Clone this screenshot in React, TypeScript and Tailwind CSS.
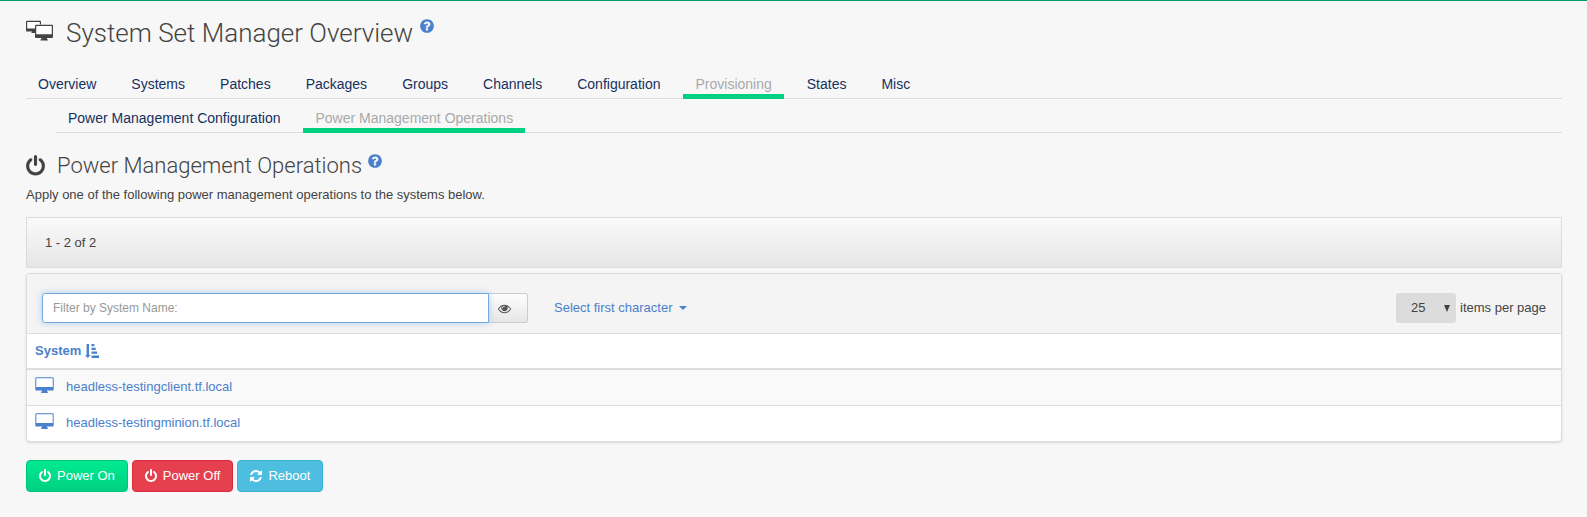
import React from "react";

const POWER =
  "M1664 896q0 156-61 298t-164 245-245 164-298 61-298-61-245-164-164-245-61-298q0-182 80.5-343t226.5-270q43-32 95.5-25t83.5 50q32 42 24.5 94.5t-49.5 84.5q-98 74-151.5 181t-53.5 228q0 104 40.5 198.5t109.5 163.5 163.5 109.5 198.5 40.5 198.5-40.5 163.5-109.5 109.5-163.5 40.5-198.5q0-121-53.5-228t-151.5-181q-42-32-49.5-84.5t24.5-94.5q31-43 84-50t95 25q146 109 226.5 270t80.5 343zm-640-768v640q0 52-38 90t-90 38-90-38-38-90v-640q0-52 38-90t90-38 90 38 38 90z";
const HELP =
  "M1024 1376v-192q0-14-9-23t-23-9h-192q-14 0-23 9t-9 23v192q0 14 9 23t23 9h192q14 0 23-9t9-23zm256-672q0-88-55.5-163t-138.5-116-170-41q-243 0-371 213-15 24 8 42l132 100q7 6 19 6 16 0 25-12 53-68 86-92 34-24 86-24 48 0 85.5 26t37.5 59q0 38-20 61t-68 45q-63 28-115.5 86.5t-52.5 125.5v36q0 14 9 23t23 9h192q14 0 23-9t9-23q0-19 21.5-49.5t54.5-49.5q32-18 49-28.5t46-35 44.5-48 28-60.5 12.5-81zm384 192q0 209-103 385.5t-279.5 279.5-385.5 103-385.5-103-279.5-279.5-103-385.5 103-385.5 279.5-279.5 385.5-103 385.5 103 279.5 279.5 103 385.5z";
const REFRESH =
  "M1639 1056q0 5-1 7-64 268-268 434.5t-478 166.5q-146 0-282.5-55t-243.5-157l-129 129q-19 19-45 19t-45-19-19-45v-448q0-26 19-45t45-19h448q26 0 45 19t19 45-19 45l-137 137q71 66 161 102t187 36q134 0 250-65t186-179q11-17 53-117 8-23 30-23h192q13 0 22.5 9.5t9.5 22.5zm25-800v448q0 26-19 45t-45 19h-448q-26 0-45-19t-19-45 19-45l138-138q-148-137-349-137-134 0-250 65t-186 179q-11 17-53 117-8 23-30 23h-199q-13 0-22.5-9.5t-9.5-22.5v-7q65-268 270-434.5t480-166.5q146 0 284 55.5t245 156.5l130-129q19-19 45-19t45 19 19 45z";
const EYE =
  "M1664 960q-152-236-381-353 61 104 61 225 0 185-131.5 316.5t-316.5 131.5-316.5-131.5-131.5-316.5q0-121 61-225-229 117-381 353 133 205 333.5 326.5t434.5 121.5 434.5-121.5 333.5-326.5zm-720-384q0-20-14-34t-34-14q-125 0-214.5 89.5t-89.5 214.5q0 20 14 34t34 14 34-14 14-34q0-86 61-147t147-61q20 0 34-14t14-34zm848 384q0 34-20 69-140 230-376.5 368.5t-499.5 138.500-499.500-139-376.500-368q-20-35-20-69t20-69q140-229 376.500-368t499.500-139 499.500 139 376.500 368q20 35 20 69z";

function Glyph({ d, className, viewBox = "128 0 1536 1792" }: { d: string; className: string; viewBox?: string }) {
  return (
    <svg viewBox={viewBox} fill="currentColor" aria-hidden="true" className={className}>
      <path d={d} />
    </svg>
  );
}

function DesktopIcon() {
  return (
    <svg viewBox="0 0 19 16" fill="currentColor" aria-hidden="true" className="h-4 w-[19px] shrink-0">
      <rect x="1" y="1" width="17" height="9" fill="#ffffff" />
      <path
        fillRule="evenodd"
        d="M1.500 0.200h16a1.200 1.200 0 0 1 1.200 1.200v11a1.200 1.200 0 0 1-1.200 1.200H12v1h.8V16H6.200v-1.400H7v-1H1.500A1.200 1.200 0 0 1 .3 12.400v-11A1.200 1.200 0 0 1 1.500.2zM1.300 1.200V10h16.400V1.200z"
      />
    </svg>
  );
}

function SystemsIcon() {
  return (
    <svg viewBox="0 0 27 21" fill="currentColor" aria-hidden="true" className="h-[21px] w-[27px] shrink-0">
      <rect x="1" y="2" width="13" height="7" fill="#ffffff" />
      <path
        fillRule="evenodd"
        d="M1 .8h13a1 1 0 0 1 1 1V4.500h-1.200V2H1.200V8.500H9.500V13H5.500v-1H6V11.500H1a1 1 0 0 1-1-1V1.800a1 1 0 0 1 1-1z"
      />
      <rect x="10" y="6" width="16" height="9" fill="#ffffff" />
      <path
        fillRule="evenodd"
        d="M10 4.800H26a1 1 0 0 1 1 1V17a1 1 0 0 1-1 1h-5v1.200h.8V20.500h-7.200v-1.300h.8V18H10a1 1 0 0 1-1-1V5.800a1 1 0 0 1 1-1zM10.200 6V14.300H25.800V6z"
      />
    </svg>
  );
}

function SortIcon() {
  return (
    <svg viewBox="0 0 14 14" fill="currentColor" aria-hidden="true" className="h-3.5 w-3.5">
      <path d="M1.600 0H4v11H5.500L2.800 14 0 11h1.600zM6.500 0H9.300v2.200H6.500zM6.500 3.800h4.200V6H6.500zM6.500 7.600h5.600v2.200H6.500zM6.500 11.400H14V14H6.500z" />
    </svg>
  );
}

function HelpLink() {
  return (
    <a href="#help" aria-label="Help" className="text-[#4a80cd]">
      <Glyph d={HELP} className="h-4 w-[14px]" />
    </a>
  );
}

function Tabs({ label, items, active, className }: { label: string; items: string[]; active: string; className: string }) {
  return (
    <nav aria-label={label} className={className}>
      <ul className="flex gap-[11px] border-b border-[#dcdcdc] text-[14px] leading-5">
        {items.map((item) => (
          <li key={item} className="-mb-px flex">
            <a
              href="#tab"
              aria-current={item === active ? "page" : undefined}
              className={
                item === active
                  ? "border-b-[5px] border-[#00d081] px-3 pt-1 text-[#a9a9ab]"
                  : "border-b-[5px] border-transparent px-3 pt-1 text-[#15315f]"
              }
            >
              {item}
            </a>
          </li>
        ))}
      </ul>
    </nav>
  );
}

const TABS = ["Overview", "Systems", "Patches", "Packages", "Groups", "Channels", "Configuration", "Provisioning", "States", "Misc"];
const SUBTABS = ["Power Management Configuration", "Power Management Operations"];
const SYSTEMS = ["headless-testingclient.tf.local", "headless-testingminion.tf.local"];

export default function App() {
  return (
    <main className="min-h-screen border-t border-[#009a66] bg-[#f7f7f7] pl-[26px] pr-[25px] font-['Liberation_Sans',Arial,sans-serif] text-[13px] leading-5 text-[#434343]">
      <div className="flex items-start pt-4">
        <span className="pt-[3px]">
          <SystemsIcon />
        </span>
        <h1 className="ml-[13px] mr-[7px] font-['Roboto',sans-serif] text-[26px] font-light leading-8">System Set Manager Overview</h1>
        <span className="pt-px">
          <HelpLink />
        </span>
      </div>

      <Tabs label="System set" items={TABS} active="Provisioning" className="mt-[21px]" />
      <Tabs label="Provisioning" items={SUBTABS} active="Power Management Operations" className="ml-[30px] mt-[5px]" />

      <div className="mt-[17px] flex items-start">
        <Glyph d={POWER} className="mt-[5px] h-[22px] w-[19px]" />
        <h2 className="ml-3 mr-[6px] font-['Roboto',sans-serif] text-[22px] font-light leading-8">Power Management Operations</h2>
        <span className="pt-[3px]">
          <HelpLink />
        </span>
      </div>
      <p className="mt-[3px]">Apply one of the following power management operations to the systems below.</p>

      <div className="mt-3 border border-[#dcdcdc] bg-linear-to-b from-[#fafafa] to-[#e6e6e6] px-[18px] py-[15px] text-[13px] leading-[19px]">1 - 2 of 2</div>

      <section className="mt-[5px] overflow-hidden rounded border border-[#dcdcdc] bg-white shadow-sm">
        <div className="flex items-center border-b border-[#dcdcdc] bg-[#f4f4f4] px-[15px] pb-[10px] pt-[19px]">
          <div className="flex w-[486px]">
            <input
              type="text"
              autoFocus
              aria-label="Filter by System Name"
              placeholder="Filter by System Name:"
              className="z-10 h-[30px] min-w-0 grow rounded-l-[3px] border border-[#72aae4] bg-white px-[10px] text-xs shadow-[0_0_6px_rgba(102,165,233,0.5)] outline-none placeholder:text-[#999999]"
            />
            <button
              type="button"
              aria-label="Filter"
              className="flex h-[30px] w-[39px] items-center rounded-r-[3px] border border-l-0 border-[#cccccc] bg-linear-to-b from-[#fefefe] to-[#e6e6e6] pl-[9px] text-[#555555]"
            >
              <Glyph d={EYE} viewBox="0 0 1792 1792" className="h-[13px] w-[13px]" />
            </button>
          </div>
          <button type="button" className="ml-[26px] flex items-center gap-[6px] text-[13px] leading-5 text-[#4a80cd]">
            Select first character
            <svg viewBox="0 0 8 4" fill="currentColor" aria-hidden="true" className="h-1 w-2">
              <path d="M0 0h8L4 4z" />
            </svg>
          </button>
          <label className="ml-auto flex items-center gap-1">
            <span className="grid items-center">
              <select defaultValue="25" className="col-start-1 row-start-1 h-[30px] w-[60px] appearance-none rounded-[3px] bg-[#dcdcdc] pl-[15px] text-[13px]">
                <option>25</option>
                <option>50</option>
                <option>100</option>
              </select>
              <svg viewBox="0 0 6 7" fill="currentColor" aria-hidden="true" className="pointer-events-none col-start-1 row-start-1 mr-[6px] h-[7px] w-[6px] justify-self-end">
                <path d="M0 0h6L3 7z" />
              </svg>
            </span>
            items per page
          </label>
        </div>
        <table className="w-full border-collapse text-[#4a80cd]">
          <thead>
            <tr className="border-b-2 border-[#dcdcdc]">
              <th className="h-[35px] px-2 text-left">
                <a href="#sort" className="flex items-center gap-1">
                  System <SortIcon />
                </a>
              </th>
            </tr>
          </thead>
          <tbody>
            {SYSTEMS.map((name) => (
              <tr key={name} className="border-b border-[#dcdcdc] odd:bg-[#f9f9f9] last:border-b-0">
                <td className="h-9 px-2">
                  <a href="#system" className="flex items-center gap-3">
                    <span className="pb-1">
                      <DesktopIcon />
                    </span>
                    {name}
                  </a>
                </td>
              </tr>
            ))}
          </tbody>
        </table>
      </section>

      <div className="mt-[18px] flex gap-1 pb-6 text-[13px] leading-5 text-white">
        <button type="button" className="flex h-8 items-center gap-[6px] rounded border border-[#00c579] bg-linear-to-b from-[#00ea91] to-[#00d081] px-3">
          <Glyph d={POWER} className="h-[14px] w-3" />
          Power On
        </button>
        <button type="button" className="flex h-8 items-center gap-[6px] rounded border border-[#db2a3c] bg-[#e6404f] px-3">
          <Glyph d={POWER} className="h-[14px] w-3" />
          Power Off
        </button>
        <button type="button" className="flex h-8 items-center gap-[6px] rounded border border-[#38b3d6] bg-[#4dbedf] px-3">
          <Glyph d={REFRESH} className="h-[14px] w-3" />
          Reboot
        </button>
      </div>
    </main>
  );
}
